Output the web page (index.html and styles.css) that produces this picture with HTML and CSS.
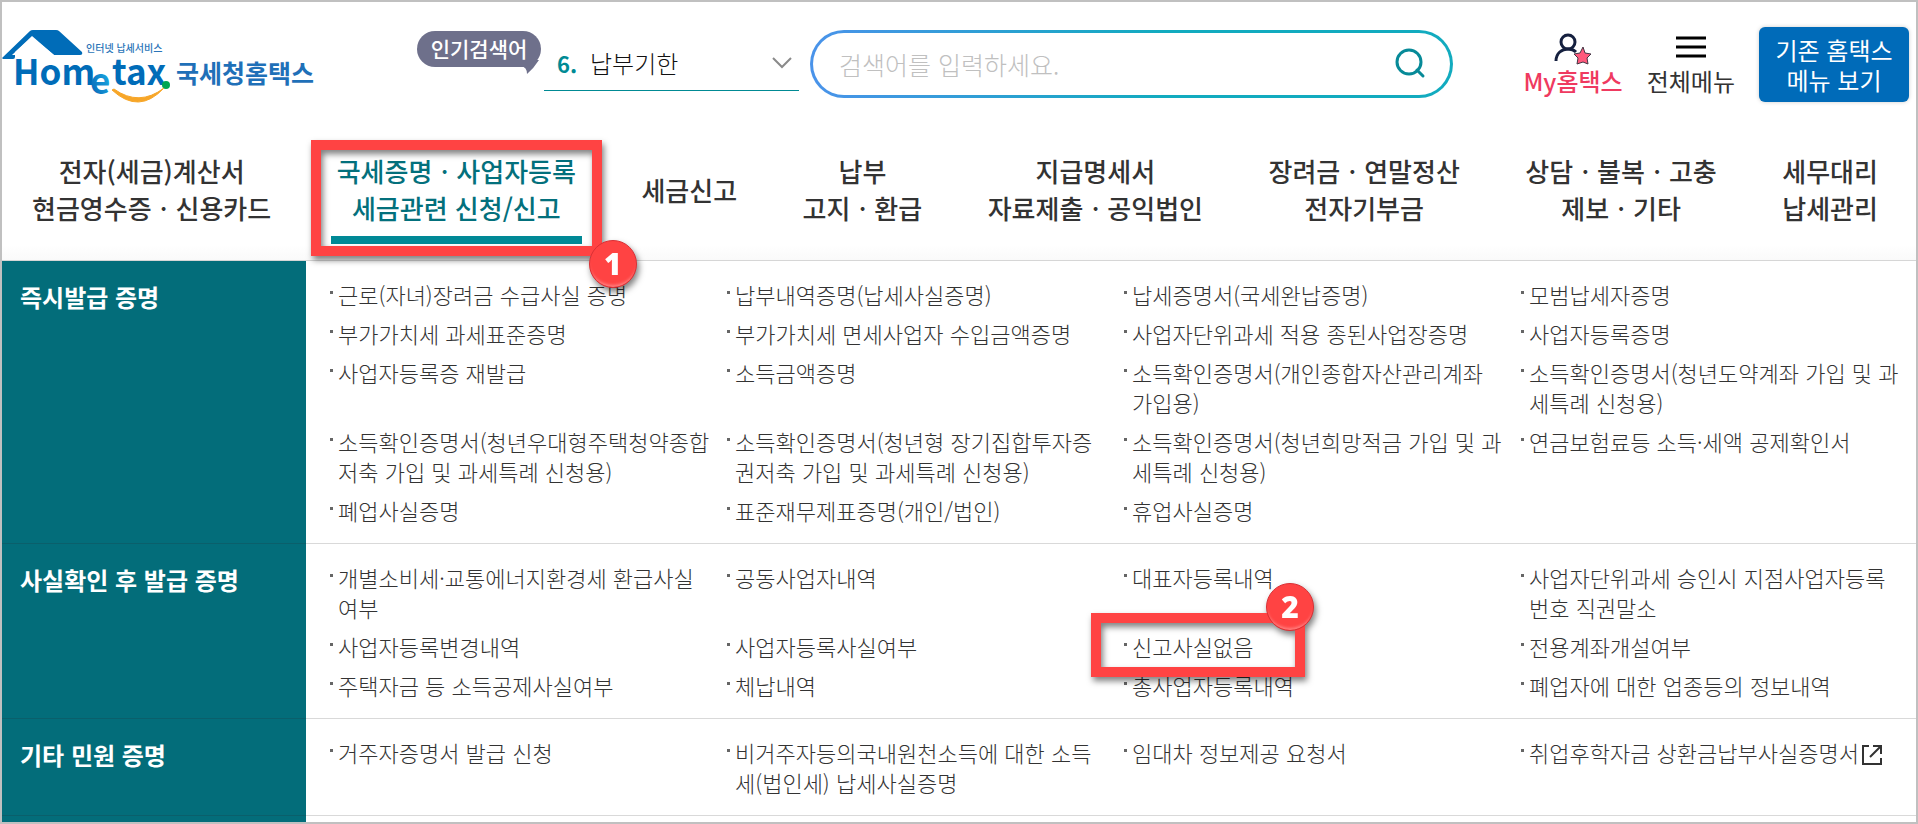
FILE: index.html
```html
<!DOCTYPE html>
<html lang="ko">

<head>
    <meta charset="UTF-8">
    <meta name="viewport" content="width=device-width, initial-scale=1.0">
    <title>국세청홈택스</title>
    <link rel="stylesheet" href="styles.css">
</head>

<body>
    <header class="header">
        <a class="logo" href="#">
            <svg width="320" height="80" viewBox="0 0 320 80" role="img" aria-label="Hometax 국세청홈택스">
                <defs>
                    <linearGradient id="eFill" x1="0" y1="1" x2="1" y2="0">
                        <stop offset="0.2" stop-color="#0a6fbd" />
                        <stop offset="1" stop-color="#22c0f0" />
                    </linearGradient>
                </defs>
                <path d="M0 31 L28 4 Q29 3 31 3 H54 Q56 3 57 4 L80 25 Q81 28 78 28 H52 L30 10 L13 25 V30 Q13 32 11 32 H1 Z" fill="#006cb8" />
                <path d="M30 9 L10 28 H52 Z" fill="#fff" />
                <text x="11" y="58" class="logo-en">Hom</text>
                <text x="88" y="67" class="logo-en" fill="url(#eFill)">e</text>
                <text x="110" y="58" class="logo-en">tax</text>
                <circle cx="164" cy="58" r="4" fill="#00a651" />
                <path d="M110 63 Q137 88 162 61 Q137 80 112 62 Z" fill="#f7a628" stroke="#f7a628" stroke-width="1" />
                <text x="84" y="25" class="logo-sub">인터넷 납세서비스</text>
                <text x="174" y="56" class="logo-ko">국세청홈택스</text>
            </svg>
        </a>

        <div class="popular">
            <span class="popular-badge">인기검색어
                <svg class="popular-tail" width="20" height="14" viewBox="0 0 20 14"><path d="M0 0 H20 Q15 8 8 14 Q8 7 2 6 H0 Z" fill="#6e708b" /></svg>
            </span>
            <div class="popular-select">
                <label for="keyword">6.</label>
                <select id="keyword">
                    <option>납부기한</option>
                </select>
                <svg width="20" height="12" viewBox="0 0 20 12"><path d="M1 1 L10 10 L19 1" fill="none" stroke="#8a8a8a" stroke-width="2" /></svg>
            </div>
        </div>

        <form class="search">
            <input type="text" aria-label="검색어" placeholder="검색어를 입력하세요.">
            <button type="button" aria-label="검색">
                <svg width="32" height="32" viewBox="0 0 32 32" fill="none" stroke="#078a98" stroke-width="3" stroke-linecap="round">
                    <circle cx="15" cy="14" r="12" />
                    <path d="M23 22 L29 28" />
                </svg>
            </button>
        </form>

        <div class="util">
            <a class="util-link my" href="#">
                <svg width="38" height="34" viewBox="0 0 38 34">
                    <circle cx="14" cy="10" r="7" fill="none" stroke="#15203f" stroke-width="3" />
                    <path d="M2 29 C2 21 8 17 14 17 C17 17 20 18 22 20" fill="none" stroke="#15203f" stroke-width="3" />
                    <path d="M29 15 L31 21 L37 22 L33 26 L34 32 L29 30 L23 32 L24 26 L20 22 L26 21 Z" fill="#ff5a7c" stroke="#443544" stroke-width="1" stroke-linejoin="round" />
                </svg>
                <span>My홈택스</span>
            </a>
            <a class="util-link" href="#">
                <svg width="30" height="34" viewBox="0 0 30 34"><path d="M0 6 H30 M0 15 H30 M0 24 H30" stroke="#000" stroke-width="3" /></svg>
                <span>전체메뉴</span>
            </a>
            <button class="old-menu" type="button">기존 홈택스<br>메뉴 보기</button>
        </div>
    </header>

    <nav class="gnb">
        <a href="#">전자(세금)계산서<br>현금영수증ㆍ신용카드</a>
        <a href="#" class="active">국세증명ㆍ사업자등록<br>세금관련 신청/신고
            <span class="mark mark-nav"><b class="mark-num">1</b></span>
        </a>
        <a href="#">세금신고</a>
        <a href="#">납부<br>고지ㆍ환급</a>
        <a href="#">지급명세서<br>자료제출ㆍ공익법인</a>
        <a href="#">장려금ㆍ연말정산<br>전자기부금</a>
        <a href="#">상담ㆍ불복ㆍ고충<br>제보ㆍ기타</a>
        <a href="#">세무대리<br>납세관리</a>
    </nav>

    <main class="menu">
        <section class="menu-row">
            <h2>즉시발급 증명</h2>
            <ul>
                <li><a href="#">근로(자녀)장려금 수급사실 증명</a></li>
                <li><a href="#">납부내역증명(납세사실증명)</a></li>
                <li><a href="#">납세증명서(국세완납증명)</a></li>
                <li><a href="#">모범납세자증명</a></li>
                <li><a href="#">부가가치세 과세표준증명</a></li>
                <li><a href="#">부가가치세 면세사업자 수입금액증명</a></li>
                <li><a href="#">사업자단위과세 적용 종된사업장증명</a></li>
                <li><a href="#">사업자등록증명</a></li>
                <li><a href="#">사업자등록증 재발급</a></li>
                <li><a href="#">소득금액증명</a></li>
                <li><a href="#">소득확인증명서(개인종합자산관리계좌 가입용)</a></li>
                <li><a href="#">소득확인증명서(청년도약계좌 가입 및 과세특례 신청용)</a></li>
                <li><a href="#">소득확인증명서(청년우대형주택청약종합저축 가입 및 과세특례 신청용)</a></li>
                <li><a href="#">소득확인증명서(청년형 장기집합투자증권저축 가입 및 과세특례 신청용)</a></li>
                <li><a href="#">소득확인증명서(청년희망적금 가입 및 과세특례 신청용)</a></li>
                <li><a href="#">연금보험료등 소득·세액 공제확인서</a></li>
                <li><a href="#">폐업사실증명</a></li>
                <li><a href="#">표준재무제표증명(개인/법인)</a></li>
                <li><a href="#">휴업사실증명</a></li>
            </ul>
        </section>
        <section class="menu-row">
            <h2>사실확인 후 발급 증명</h2>
            <ul>
                <li><a href="#">개별소비세·교통에너지환경세 환급사실여부</a></li>
                <li><a href="#">공동사업자내역</a></li>
                <li><a href="#">대표자등록내역</a></li>
                <li><a href="#">사업자단위과세 승인시 지점사업자등록번호 직권말소</a></li>
                <li><a href="#">사업자등록변경내역</a></li>
                <li><a href="#">사업자등록사실여부</a></li>
                <li><a href="#">신고사실없음</a><span class="mark mark-item"><b class="mark-num">2</b></span></li>
                <li><a href="#">전용계좌개설여부</a></li>
                <li><a href="#">주택자금 등 소득공제사실여부</a></li>
                <li><a href="#">체납내역</a></li>
                <li><a href="#">총사업자등록내역</a></li>
                <li><a href="#">폐업자에 대한 업종등의 정보내역</a></li>
            </ul>
        </section>
        <section class="menu-row">
            <h2>기타 민원 증명</h2>
            <ul>
                <li><a href="#">거주자증명서 발급 신청</a></li>
                <li><a href="#">비거주자등의국내원천소득에 대한 소득세(법인세) 납세사실증명</a></li>
                <li><a href="#">임대차 정보제공 요청서</a></li>
                <li><a href="#">취업후학자금 상환금납부사실증명서<svg class="ext" width="22" height="22" viewBox="0 0 22 22" fill="none" stroke="#333" stroke-width="2"><path d="M8 2 H2 V20 H20 V14 M12 2 H20 V10 M20 2 L9 13" /></svg></a></li>
            </ul>
        </section>
        <section class="menu-row rest">
            <h2></h2>
        </section>
    </main>
</body>

</html>
```

FILE: styles.css
```css
* {
    box-sizing: border-box;
}

body {
    display: flex;
    flex-direction: column;
    height: 100vh;
    margin: 0;
    border: 2px solid #c0c0c0;
    overflow: hidden;
    background: #fff;
    color: #333;
    font-family: "Noto Sans CJK KR", sans-serif;
}

a {
    color: inherit;
    text-decoration: none;
}

/* header */
.header {
    display: flex;
    align-items: flex-start;
    padding: 25px 7px 0 0;
}

.logo svg {
    display: block;
}

.logo-en {
    font-size: 35px;
    font-weight: 700;
}

.logo-en:not([fill]) {
    fill: #006cb8;
}

.logo-sub {
    font-size: 10px;
    font-weight: 500;
    fill: #2a74b8;
}

.logo-ko {
    font-size: 25px;
    font-weight: 700;
    fill: #1f70b8;
}

.popular {
    display: flex;
    align-items: flex-start;
    margin-left: 95px;
}

.popular-badge {
    position: relative;
    width: 124px;
    height: 36px;
    margin: 4px 3px 0 0;
    border-radius: 18px;
    background: #6e708b;
    color: #fff;
    font-size: 21px;
    font-weight: 500;
    line-height: 34px;
    text-align: center;
}

.popular-tail {
    position: absolute;
    right: 2px;
    bottom: -7px;
}

.popular-select {
    display: flex;
    align-items: center;
    width: 255px;
    height: 64px;
    padding: 8px 7px 0 13px;
    border-bottom: 1px solid #008a94;
}

.popular-select label {
    width: 33px;
    color: #008a94;
    font-size: 22px;
    font-weight: 700;
}

.popular-select select {
    flex: 1;
    padding: 0;
    border: 0;
    background: none;
    color: #111;
    font-family: inherit;
    font-size: 24px;
    font-weight: 300;
    appearance: none;
}

.search {
    display: flex;
    flex: 1;
    align-items: center;
    height: 68px;
    margin: 3px 70px 0 11px;
    padding: 0 24px 0 26px;
    border: 3px solid transparent;
    border-radius: 34px;
    background: linear-gradient(#fff, #fff) padding-box, linear-gradient(90deg, #4a93ea, #12abbf 55%) border-box;
}

.search input {
    flex: 1;
    min-width: 0;
    padding: 0;
    border: 0;
    outline: none;
    background: none;
    font-family: inherit;
    font-size: 25px;
    font-weight: 300;
}

.search input::placeholder {
    color: #c0c0c0;
}

.search button {
    height: 32px;
    padding: 0;
    border: 0;
    background: none;
}

.util {
    display: flex;
    align-items: flex-start;
    gap: 24px;
}

.util-link {
    display: flex;
    flex-direction: column;
    align-items: center;
    padding-top: 5px;
    font-size: 24px;
    line-height: 30px;
}

.my {
    color: #ef3a60;
    font-weight: 500;
}

.old-menu {
    width: 150px;
    height: 75px;
    padding: 0;
    border: 0;
    border-radius: 6px;
    background: #006bb9;
    box-shadow: 0 0 4px rgba(0, 0, 0, 0.2);
    color: #fff;
    font-family: inherit;
    font-size: 24px;
    line-height: 30px;
}

/* main navigation */
.gnb {
    display: flex;
    justify-content: space-between;
    padding: 45px 32px 16px 24px;
    border-bottom: 1px solid #d6d6d6;
    background: linear-gradient(#fff 90%, #fafafa);
    font-size: 26px;
    font-weight: 500;
    line-height: 37px;
    text-align: center;
    white-space: nowrap;
}

.gnb > a {
    position: relative;
    display: block;
    align-self: center;
    padding: 0 6px 10px;
    border-bottom: 8px solid transparent;
}

.gnb .active {
    border-color: #008996;
    color: #03707c;
}

/* mega menu */
.menu {
    display: flex;
    flex: 1;
    flex-direction: column;
}

.menu-row {
    display: flex;
    border-bottom: 1px solid #d9d9d9;
}

.menu-row h2 {
    width: 304px;
    margin: 0 0 -1px;
    padding: 18px;
    border-bottom: 1px solid #0a5f6b;
    background: #036d7a;
    color: #fff;
    font-size: 24px;
    font-weight: 700;
    line-height: 36px;
}

.menu-row ul {
    display: grid;
    flex: 1;
    grid-template-columns: repeat(4, 1fr);
    row-gap: 9px;
    margin: 0;
    padding: 18px 0 18px 22px;
    list-style: none;
    font-size: 22px;
    font-weight: 300;
    line-height: 30px;
}

.menu-row li {
    position: relative;
    padding: 0 14px 0 10px;
}

.menu-row li::before {
    content: "";
    position: absolute;
    top: 12px;
    left: 2px;
    width: 3px;
    height: 3px;
    background: #666;
}

.menu-row.rest {
    flex: 1;
    border: 0;
}

.rest h2 {
    border: 0;
    padding: 0;
}

.ext {
    margin-left: 2px;
    vertical-align: -4px;
}

/* step markers drawn over the menu */
.mark {
    position: absolute;
    z-index: 1;
    border: 10px solid #ff4343;
    filter: drop-shadow(2px 4px 3px rgba(0, 0, 0, 0.5));
    pointer-events: none;
}

.mark-nav {
    top: -12px;
    right: -20px;
    bottom: -20px;
    left: -20px;
}

.mark-item {
    top: -18px;
    left: -31px;
    width: 214px;
    height: 64px;
}

.mark-num {
    position: absolute;
    top: -40px;
    right: -19px;
    width: 48px;
    height: 48px;
    border: 1px solid #d93035;
    border-radius: 50%;
    background: #ff4343;
    box-shadow: inset 0 -4px 3px -2px #ff8080;
    color: #fff;
    font-family: "Noto Sans", sans-serif;
    font-size: 30px;
    font-weight: 900;
    line-height: 46px;
    text-align: center;
}

.mark-nav .mark-num {
    top: 90px;
    right: -45px;
}
```
